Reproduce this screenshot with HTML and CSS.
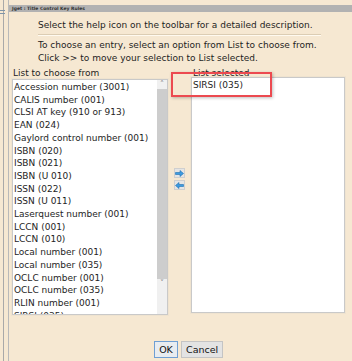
FILE: index.html
```html
<!DOCTYPE html>
<html lang="en">
<head>
  <meta charset="UTF-8">
  <title>Jget : Title Control Key Rules</title>
  <link rel="stylesheet" href="styles.css">
</head>
<body>

  <div class="desk">
    <!-- Borde izquierdo de la ventana de fondo -->
    <div class="rail">
      <span class="grip"></span>
      <span class="grip"></span>
    </div>

    <div class="window">
      <div class="titlebar">Jget : Title Control Key Rules</div>

      <div class="intro">
        <p class="help">Select the help icon on the toolbar for a detailed description.</p>
        <p class="howto">To choose an entry, select an option from List to choose from.<br>Click &gt;&gt; to move your selection to List selected.</p>
      </div>

      <div class="lists">
        <div class="col col-left">
          <div class="label">List to choose from</div>
          <div class="listbox">
            <div class="items">
              <div class="item">Accession number (3001)</div>
              <div class="item">CALIS number (001)</div>
              <div class="item">CLSI AT key (910 or 913)</div>
              <div class="item">EAN (024)</div>
              <div class="item">Gaylord control number (001)</div>
              <div class="item">ISBN (020)</div>
              <div class="item">ISBN (021)</div>
              <div class="item">ISBN (U 010)</div>
              <div class="item">ISSN (022)</div>
              <div class="item">ISSN (U 011)</div>
              <div class="item">Laserquest number (001)</div>
              <div class="item">LCCN (001)</div>
              <div class="item">LCCN (010)</div>
              <div class="item">Local number (001)</div>
              <div class="item">Local number (035)</div>
              <div class="item">OCLC number (001)</div>
              <div class="item">OCLC number (035)</div>
              <div class="item">RLIN number (001)</div>
              <div class="item">SIRSI (035)</div>
            </div>
            <div class="scrollbar">
              <span class="arrow">&#x2c4;</span>
              <span class="thumb"></span>
              <span class="arrow">&#x2c5;</span>
            </div>
          </div>
        </div>

        <div class="movers">
          <button class="move" title="Add">
            <svg width="9" height="7" viewBox="0 0 9 7">
              <path d="M0.5 2.5h4.5v-2l3.5 3-3.5 3v-2h-4.5z" fill="#3d9be0" stroke="#1f6fb2" stroke-width="0.6"/>
            </svg>
          </button>
          <button class="move" title="Remove">
            <svg width="9" height="7" viewBox="0 0 9 7">
              <path d="M8.5 2.5h-4.5v-2l-3.5 3 3.5 3v-2h4.5z" fill="#3d9be0" stroke="#1f6fb2" stroke-width="0.6"/>
            </svg>
          </button>
        </div>

        <div class="col col-right">
          <div class="label">List selected</div>
          <div class="listbox">
            <div class="items">
              <div class="item">SIRSI (035)</div>
            </div>
          </div>
          <!-- Recuadro rojo de la captura -->
          <span class="callout"></span>
        </div>
      </div>

      <div class="actions">
        <button class="btn btn-ok">OK</button>
        <button class="btn">Cancel</button>
      </div>
    </div>
  </div>

</body>
</html>
```

FILE: styles.css
```css
/* Colores generales */
:root {
  --panel: #f6e8d2;
  --text: #1e1e1e;
  --frame: #a9a9a9;
  --box-border: #c9c9c9;
}

body {
  margin: 0;
  width: 352px;
  height: 361px;
  overflow: hidden;
  background-color: var(--panel);
  font-family: "DejaVu Sans", Verdana, sans-serif;
  color: var(--text);
}

.desk {
  display: flex;
  height: 361px;
}

/* Borde izquierdo */
.rail {
  width: 4px;
  margin-left: 3px;
  border-left: 1px solid var(--frame);
  display: flex;
  flex-direction: column;
  gap: 2px;
  padding-top: 10px;
  margin-right: 0;
  position: relative;
}

.grip {
  display: block;
  width: 5px;
  height: 1px;
  margin-left: -4px;
  background-color: #7e94a8;
}

.window {
  flex: 1;
  border-left: 1px solid #b9b9b9;
  display: flex;
  flex-direction: column;
  padding-top: 5px;
}

.titlebar {
  height: 7px;
  background-color: #b2b2b2;
  font-size: 4.5px;
  line-height: 7px;
  padding-left: 3px;
  color: #333;
  font-weight: bold;
}

/* Textos de instrucciones */
.intro {
  padding-left: 29px;
  font-size: 9px;
  line-height: 13px;
}

.intro p {
  margin: 0;
}

.help {
  margin-top: 7px !important;
  width: 283px;
  padding-bottom: 2px;
  border-bottom: 1px solid #dccdb4;
  box-shadow: 0 1px 0 #fffaf0;
}

.howto {
  margin-top: 4px !important;
}

/* Listas */
.lists {
  display: flex;
  align-items: flex-start;
  margin-top: 2px;
  padding-left: 3px;
}

.col {
  display: flex;
  flex-direction: column;
  position: relative;
}

.label {
  font-size: 9px;
  line-height: 12px;
  padding-left: 1px;
}

.listbox {
  display: flex;
  height: 234px;
  background-color: #fff;
  border: 1px solid var(--box-border);
  box-shadow: 0 0 0 1px #efe3cf;
  overflow: hidden;
}

.col-left .listbox {
  width: 154px;
}

.col-right .listbox {
  width: 152px;
  margin-top: -2px;
}

.col-right .label {
  padding-left: 2px;
}

.items {
  flex: 1;
  font-size: 9px;
  line-height: 12.7px;
  padding-left: 1px;
  padding-top: 1px;
  white-space: nowrap;
}

.scrollbar {
  width: 10px;
  background-color: #f0f0f0;
  display: flex;
  flex-direction: column;
  align-items: center;
}

.arrow {
  height: 9px;
  font-size: 8px;
  line-height: 9px;
  color: #8a8a8a;
}

.thumb {
  width: 10px;
  height: 190px;
  background-color: #cdcdcd;
}

/* Botones de mover */
.movers {
  display: flex;
  flex-direction: column;
  gap: 2px;
  margin: 101px 6px 0 6px;
}

.move {
  width: 11px;
  height: 10px;
  padding: 0;
  border: 1px solid #cfcfcf;
  background-color: #e4e4e4;
  display: flex;
  justify-content: center;
  align-items: center;
}

.callout {
  position: absolute;
  left: -20px;
  top: 5px;
  width: 97px;
  height: 21px;
  border: 2px solid #ec4a50;
  box-shadow: 1px 1px 3px rgba(0, 0, 0, 0.25);
}

/* Botones de pie */
.actions {
  display: flex;
  gap: 3px;
  margin-top: 26px;
  padding-left: 145px;
}

.btn {
  height: 17px;
  padding: 0 4px;
  font-family: "DejaVu Sans", Verdana, sans-serif;
  font-size: 9.5px;
  color: #111;
  background-color: #e3e3e3;
  border: 1px solid #c4c4c4;
}

.btn-ok {
  width: 24px;
  border-color: #6f9fd4;
  background-color: #e8ecf0;
}
```
